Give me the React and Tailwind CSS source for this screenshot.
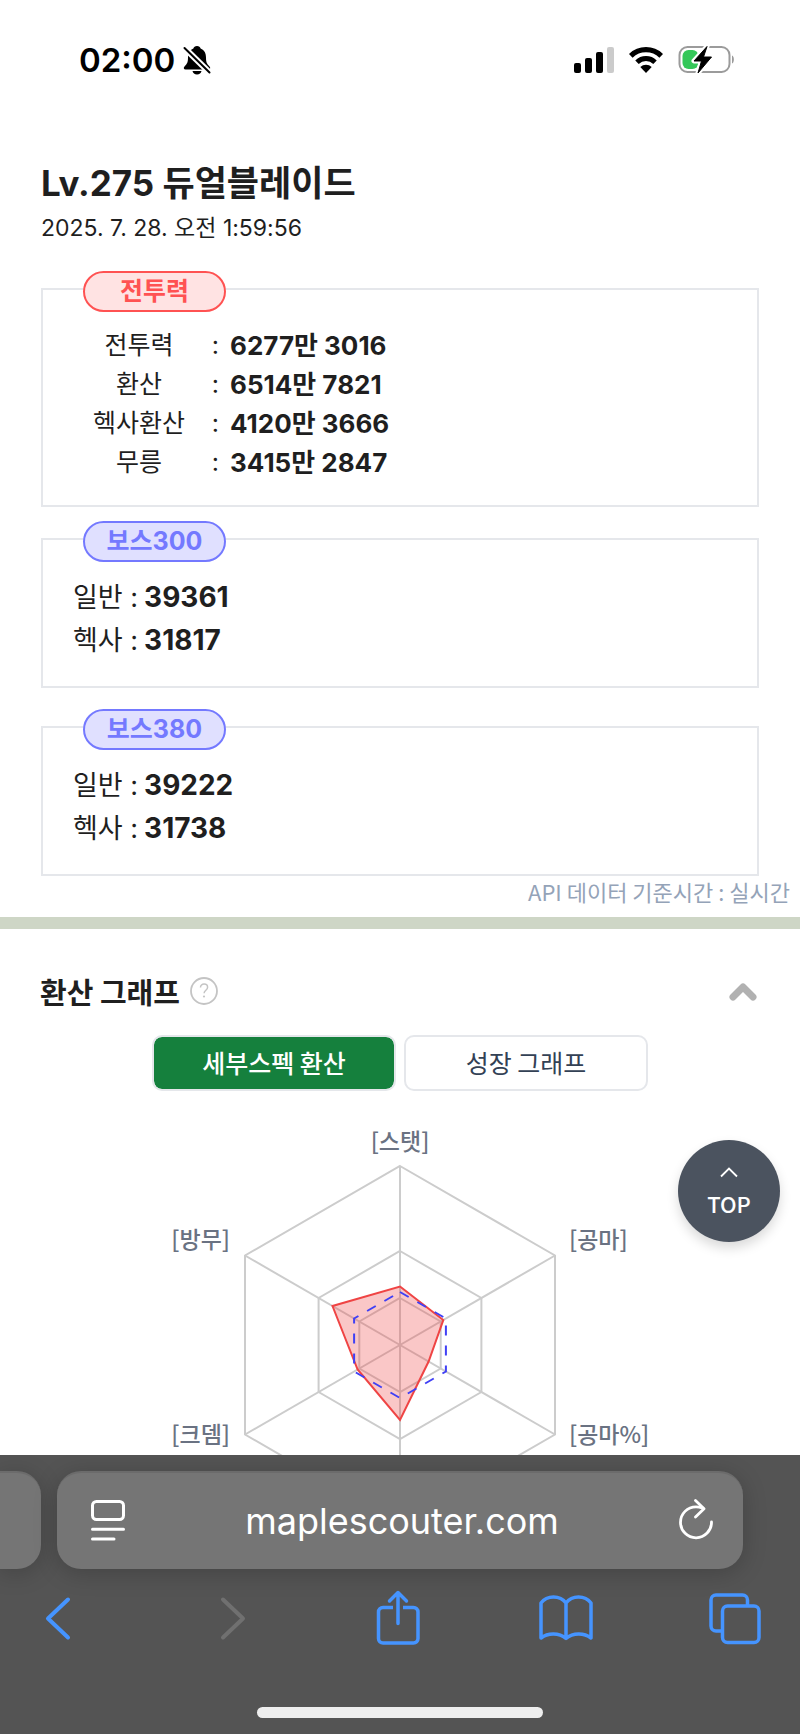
import React, { useRef, useState } from 'react';

const powerRows = [
  { label: '전투력', value: '6277만 3016' },
  { label: '환산', value: '6514만 7821' },
  { label: '헥사환산', value: '4120만 3666' },
  { label: '무릉', value: '3415만 2847' },
];

const bosses = [
  { name: '보스300', normal: '39361', hexa: '31817' },
  { name: '보스380', normal: '39222', hexa: '31738' },
];

// axes run clockwise from the top
const myStats = [58.5, 50, 33, 75, 49, 78];
const CX = 260;
const CY = 230;

function point(radius, i) {
  const a = (Math.PI / 3) * i - Math.PI / 2;
  return `${(CX + radius * Math.cos(a)).toFixed(1)},${(CY + radius * Math.sin(a)).toFixed(1)}`;
}

function hexagon(radius) {
  return [0, 1, 2, 3, 4, 5].map((i) => point(radius, i)).join(' ');
}

function StatusBar() {
  return (
    <header className="flex h-[120px] items-center justify-between pl-[79px] pr-[65px] text-black">
      <div className="flex items-center gap-2">
        <time className="text-[33px] leading-10 font-semibold">02:00</time>
        <svg width="28" height="30" viewBox="0 0 28 30" aria-label="무음">
          <path
            d="M14 1c-2 0-3.200 1-3.600 2.500C6.500 5 5 8.500 5 12.500c0 5-1 6.500-3.500 9-1.300 1.500-.7 3 1 3h23c1.700 0 2.300-1.500 1-3-2.500-2.500-3.500-4-3.500-9 0-4-1.500-7.500-5.400-9C17.200 2 16 1 14 1z"
            fill="currentColor"
          />
          <path d="M9.500 26h9c-.5 2.300-2 3.500-4.500 3.500S10 28.300 9.500 26z" fill="currentColor" />
          <path d="M1 2.500 27 28" stroke="#fff" strokeWidth="6" />
          <path d="M1.500 3 26.500 27.500" stroke="currentColor" strokeWidth="2" strokeLinecap="round" />
        </svg>
      </div>
      <div className="flex items-center">
        <svg width="41" height="28" viewBox="0 0 41 28" aria-label="신호">
          <rect x="1" y="17" width="7" height="10" rx="2" />
          <rect x="12" y="12" width="7" height="15" rx="2" />
          <rect x="23" y="6" width="7" height="21" rx="2" />
          <rect x="34" y="1" width="7" height="26" rx="2" fill="#cbcbcb" />
        </svg>
        <svg className="ml-[14px]" width="36" height="28" viewBox="0 0 36 28" aria-label="와이파이">
          <path d="M2.800 9.800a22 22 0 0 1 30.400 0" fill="none" stroke="currentColor" strokeWidth="5.200" />
          <path d="M9 16.200a13 13 0 0 1 18 0" fill="none" stroke="currentColor" strokeWidth="5" />
          <path d="M12.300 21a8.500 8.500 0 0 1 11.400 0L18 27z" />
        </svg>
        <svg className="ml-[14px]" width="57" height="30" viewBox="0 0 57 30" aria-label="배터리">
          <rect x="1.500" y="2" width="50" height="25" rx="8" fill="none" stroke="#9b9b9b" strokeWidth="2" />
          <path d="M54 10.500c2.500.8 2.500 7.200 0 8z" fill="#9b9b9b" />
          <rect x="4.500" y="5" width="16" height="19" rx="6" fill="#34c759" />
          <path d="M29 1.500 16 16h7.500L20 28 33.500 12h-8z" fill="#fff" stroke="#fff" strokeWidth="5" strokeLinejoin="round" />
          <path d="M29 1.500 16 16h7.500L20 28 33.500 12h-8z" stroke="currentColor" strokeLinejoin="round" />
        </svg>
      </div>
    </header>
  );
}

function PowerBox() {
  return (
    <section className="border-2 border-[#e5e7eb] pb-[23px]">
      <h2 className="-mt-[19px] ml-10 flex h-[41px] w-[143px] items-center justify-center rounded-full border-2 border-[#ff5252] bg-[#ffe3e3] text-[25px] font-bold text-[#ff5252]">
        전투력
      </h2>
      <dl className="mt-[14px] ml-10 leading-[39px]">
        {powerRows.map((row) => (
          <div key={row.label} className="flex">
            <dt className="flex text-[25px]">
              <span className="w-28 text-center">{row.label}</span>
              <span className="w-[35px] pr-[11px] text-right">:</span>
            </dt>
            <dd className="text-[26px] font-bold">{row.value}</dd>
          </div>
        ))}
      </dl>
    </section>
  );
}

function BossBox({ boss }) {
  return (
    <section className="border-2 border-[#e5e7eb] pb-6">
      <h2 className="-mt-[19px] ml-10 flex h-[41px] w-[143px] items-center justify-center rounded-full border-2 border-[#7479ff] bg-[#e0e0ff] text-[25px] font-bold text-[#7479ff]">
        {boss.name}
      </h2>
      <dl className="mt-[14px] ml-[30px] leading-[43px]">
        <div className="flex gap-1.5">
          <dt className="text-[27px]">일반 :</dt>
          <dd className="text-[28px] font-bold">{boss.normal}</dd>
        </div>
        <div className="flex gap-1.5">
          <dt className="text-[27px]">헥사 :</dt>
          <dd className="text-[28px] font-bold">{boss.hexa}</dd>
        </div>
      </dl>
    </section>
  );
}

function Radar() {
  return (
    <svg className="mx-auto mt-6 block" width="520" height="460" viewBox="0 0 520 460" role="img" aria-label="환산 그래프">
      <g fill="none" stroke="#cccccc" strokeWidth="2">
        {[179, 94, 47].map((r) => (
          <polygon key={r} points={hexagon(r)} />
        ))}
        {[0, 1, 2, 3, 4, 5].map((i) => (
          <polyline key={i} points={`${CX},${CY} ${point(179, i)}`} />
        ))}
      </g>
      <polygon
        points={myStats.map((r, i) => point(r, i)).join(' ')}
        fill="#ef4444"
        fillOpacity="0.3"
        stroke="#ef4444"
        strokeWidth="2"
      />
      <polygon points={hexagon(53)} fill="none" stroke="#4040f5" strokeWidth="2" strokeDasharray="10 10" />
      <g className="fill-gray-500 text-[23px] font-medium">
        <text x="260" y="35" textAnchor="middle">[스탯]</text>
        <text x="429" y="133">[공마]</text>
        <text x="429" y="328">[공마%]</text>
        <text x="90" y="328" textAnchor="end">[크뎀]</text>
        <text x="90" y="133" textAnchor="end">[방무]</text>
      </g>
    </svg>
  );
}

function GraphSection() {
  const [tab, setTab] = useState('detail');
  const [open, setOpen] = useState(true);
  const active = 'border-[#e5e7eb] bg-[#15803d] bg-clip-padding font-medium text-white';
  const idle = 'border-[#e5e7eb] bg-white text-[#334155]';

  return (
    <section className="pt-[38px] font-['Noto_Sans_CJK_KR',sans-serif]">
      <div className="flex h-12 items-center px-10">
        <h2 className="text-[29px] leading-10 font-bold">환산 그래프</h2>
        <button aria-label="도움말" className="ml-[10px]">
          <svg width="28" height="28" viewBox="0 0 28 28" fill="none" stroke="#c4c4c4">
            <circle cx="14" cy="14" r="13" strokeWidth="1.800" />
            <path d="M10.500 10.500c0-2 1.500-3.400 3.600-3.400s3.500 1.300 3.500 3.200c0 3-3.500 2.900-3.500 6" strokeWidth="1.500" />
            <circle cx="14" cy="19.500" r="1.100" fill="#c4c4c4" stroke="none" />
          </svg>
        </button>
        <button aria-label="접기" className="ml-auto" onClick={() => setOpen(!open)}>
          <svg width="32" height="24" viewBox="0 0 32 24" fill="none">
            <path d="M5 18 15 8l10 10" stroke="#b1b1b1" strokeWidth="7" strokeLinecap="round" strokeLinejoin="round" />
          </svg>
        </button>
      </div>
      {open && (
        <>
          <div className="mt-5 flex justify-center gap-2 text-[25px]">
            <button
              className={`h-14 w-[244px] rounded-[10px] border-2 ${tab === 'detail' ? active : idle}`}
              onClick={() => setTab('detail')}
            >
              세부스펙 환산
            </button>
            <button
              className={`h-14 w-[244px] rounded-[10px] border-2 ${tab === 'growth' ? active : idle}`}
              onClick={() => setTab('growth')}
            >
              성장 그래프
            </button>
          </div>
          <Radar />
        </>
      )}
    </section>
  );
}

function BrowserBar() {
  return (
    <footer className="shrink-0 overflow-hidden bg-[#545454] pt-4 pb-4">
      <div className="flex h-[98px] gap-4">
        <div className="w-[41px] rounded-r-3xl border-t-2 border-[#6b6b6b] bg-[#757575] shadow-[0_4px_24px_rgba(0,0,0,0.2)]" />
        <div className="mr-[57px] flex min-w-0 flex-1 items-center rounded-3xl border-t-2 border-[#6b6b6b] bg-[#757575] pr-[26px] pl-[30px] text-white shadow-[0_4px_24px_rgba(0,0,0,0.2)]">
          <button aria-label="페이지 메뉴">
            <svg width="42" height="44" viewBox="0 0 42 44" fill="none" stroke="currentColor" strokeWidth="3" strokeLinecap="round">
              <rect x="5.500" y="2.500" width="31" height="18" rx="4" />
              <path d="M5.500 30.300h31M5.500 40h21.500" />
            </svg>
          </button>
          <input
            aria-label="주소"
            defaultValue="maplescouter.com"
            className="min-w-0 flex-1 bg-transparent text-center text-[36px] leading-[48px] outline-none"
          />
          <button aria-label="새로고침">
            <svg width="42" height="44" viewBox="0 0 42 44" fill="none" stroke="currentColor" strokeWidth="2.800" strokeLinecap="round" strokeLinejoin="round">
              <path d="M36.500 23A15.500 15.500 0 1 1 21 7.800c2.500 0 4.500.6 7 1.400" />
              <path d="M20.500 1.500 29 9.700l-8.500 8.300" />
            </svg>
          </button>
        </div>
      </div>
      <nav className="mt-5 flex justify-between pr-[39px] pl-[31px] text-[#4594ff]" aria-label="도구">
        <button aria-label="뒤로">
          <svg width="52" height="58" viewBox="0 0 52 58" fill="none" stroke="currentColor" strokeWidth="4" strokeLinecap="round" strokeLinejoin="round">
            <path d="M37 10.500 17 29.500l20 19" />
          </svg>
        </button>
        <button aria-label="앞으로" disabled className="text-[#707070]">
          <svg width="52" height="58" viewBox="0 0 52 58" fill="none" stroke="currentColor" strokeWidth="4" strokeLinecap="round" strokeLinejoin="round">
            <path d="M23 10.500l20 19-20 19" />
          </svg>
        </button>
        <button aria-label="공유">
          <svg width="52" height="58" viewBox="0 0 52 58" fill="none" stroke="currentColor" strokeWidth="3.500" strokeLinejoin="round">
            <path d="M25 18.500H15a4.500 4.500 0 0 0-4.500 4.500v26.500a4.500 4.500 0 0 0 4.500 4.500h30.500a4.500 4.500 0 0 0 4.500-4.500V23a4.500 4.500 0 0 0-4.500-4.500H35" />
            <path d="M30 34.500V3.500M21.500 12 30 3.500l8.500 8.500" strokeLinecap="round" />
          </svg>
        </button>
        <button aria-label="책갈피">
          <svg width="56" height="58" viewBox="0 0 56 58" fill="none" stroke="currentColor" strokeWidth="3.500" strokeLinejoin="round">
            <path d="M29 14c-6-8-19-8-25 0v35c7-5.500 18-5.500 25 .5 7-6 18-6 25-.5V14c-6-8-19-8-25 0zM29 14v35" />
          </svg>
        </button>
        <button aria-label="탭">
          <svg width="52" height="58" viewBox="0 0 52 58" fill="none" stroke="currentColor" strokeWidth="3.500">
            <rect x="13.500" y="17" width="36.500" height="36.500" rx="5" />
            <path d="M38.500 17v-6a5 5 0 0 0-5-5H7a5 5 0 0 0-5 5v26a5 5 0 0 0 5 5h6.500" />
          </svg>
        </button>
      </nav>
      <div className="mx-auto mt-[60px] h-[11px] w-[286px] rounded-full bg-[#eeeeee]" />
    </footer>
  );
}

export default function App() {
  const scroller = useRef(null);

  return (
    <div className="flex h-screen flex-col bg-white font-['Inter','Noto_Sans_CJK_KR',sans-serif] text-[#1f1f1f]">
      <div className="relative min-h-0 flex-1">
        <main ref={scroller} className="h-full overflow-y-auto [scrollbar-width:none]">
          <StatusBar />
          <div className="px-[41px] pt-10">
            <h1 className="text-[35px] leading-[46px] font-bold">Lv.275 듀얼블레이드</h1>
            <p className="text-[23px] leading-[44px]">2025. 7. 28. 오전 1:59:56</p>
            <div className="mt-[38px] flex flex-col gap-[31px]">
              <PowerBox />
              <div className="flex flex-col gap-[38px]">
                {bosses.map((boss) => (
                  <BossBox key={boss.name} boss={boss} />
                ))}
              </div>
            </div>
          </div>
          <p className="pr-[10px] pb-[11px] text-right font-['Noto_Sans_CJK_KR',sans-serif] text-[22px] leading-[30px] text-[#94a3b8]">
            API 데이터 기준시간 : 실시간
          </p>
          <hr className="h-3 border-0 bg-[#ced6c6]" />
          <GraphSection />
        </main>
        <button
          onClick={() => scroller.current?.scrollTo({ top: 0, behavior: 'smooth' })}
          className="absolute right-5 bottom-[213px] flex size-[102px] flex-col items-center justify-center rounded-full bg-[#4b535f] pt-0.5 font-['Noto_Sans_CJK_KR',sans-serif] text-[22px] leading-8 font-medium text-white shadow-[0_6px_12px_rgba(0,0,0,0.15)]"
        >
          <svg className="mb-2" width="20" height="14" viewBox="0 0 20 14" fill="none" stroke="currentColor" strokeWidth="1.800">
            <path d="M2 11.500 10 3.500l8 8" />
          </svg>
          TOP
        </button>
      </div>
      <BrowserBar />
    </div>
  );
}
